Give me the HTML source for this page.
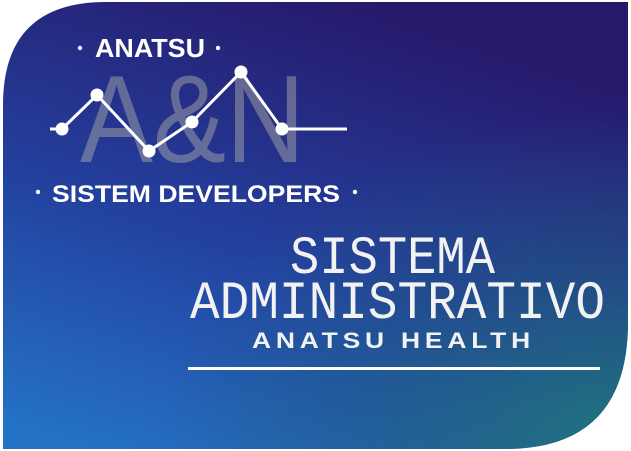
<!DOCTYPE html>
<html><head><meta charset="utf-8"><style>
html,body{margin:0;padding:0;background:#fff;width:631px;height:451px;overflow:hidden}
svg{display:block}
</style></head><body>
<svg width="631" height="451" viewBox="0 0 631 451" xmlns="http://www.w3.org/2000/svg">
<defs>
<linearGradient id="g1" x1="0.15" y1="1" x2="0.6" y2="0" gradientUnits="objectBoundingBox">
<stop offset="0" stop-color="#2472c4"/>
<stop offset="0.45" stop-color="#2342a0"/>
<stop offset="1" stop-color="#27186a"/>
</linearGradient>
<radialGradient id="g2" cx="1" cy="1" r="0.75">
<stop offset="0" stop-color="#1f7a78" stop-opacity="0.95"/>
<stop offset="0.6" stop-color="#21607a" stop-opacity="0.4"/>
<stop offset="1" stop-color="#21607a" stop-opacity="0"/>
</radialGradient>
<clipPath id="c"><path d="M3 449 L3 105 Q3 2 106 2 L628 2 L628 322 Q628 449 505 449 Z"/></clipPath>
</defs>
<g clip-path="url(#c)">
<rect width="631" height="451" fill="url(#g1)"/>
<rect width="631" height="451" fill="url(#g2)"/>
</g>
<g font-family="Liberation Sans, sans-serif" font-weight="bold" fill="#fff">
<circle cx="80" cy="48" r="2.2"/><circle cx="218" cy="48" r="2.2"/>
<text x="95" y="57" font-size="26" textLength="110" lengthAdjust="spacingAndGlyphs">ANATSU</text>
<circle cx="38" cy="192" r="2.2"/><circle cx="355" cy="192" r="2.2"/>
<text x="52" y="202" font-size="24" textLength="288" lengthAdjust="spacingAndGlyphs">SISTEM DEVELOPERS</text>
</g>
<text x="80" y="162" font-family="Liberation Sans, sans-serif" font-size="124" fill="#a6a6a6" fill-opacity="0.5" textLength="225" lengthAdjust="spacingAndGlyphs">A&amp;N</text>
<polyline points="50,129 62,129 97,95 149,151 192,122 241,72 282,129 347,129" fill="none" stroke="#fff" stroke-width="3"/>
<g fill="#fff"><circle cx="62" cy="129" r="6.5"/><circle cx="97" cy="95" r="6.5"/><circle cx="149" cy="151" r="6.5"/><circle cx="192" cy="122" r="6.5"/><circle cx="241" cy="72" r="6.5"/><circle cx="282" cy="129" r="6.5"/></g>
<g font-family="Liberation Mono, monospace" fill="#f2f2f2">
<text x="290" y="273" font-size="54" textLength="205" lengthAdjust="spacingAndGlyphs">SISTEMA</text>
<text x="190" y="318" font-size="54" textLength="415" lengthAdjust="spacingAndGlyphs">ADMINISTRATIVO</text>
</g>
<text x="252" y="348" font-family="Liberation Sans, sans-serif" font-weight="bold" font-size="22" fill="#f2f2f2" textLength="283" lengthAdjust="spacingAndGlyphs" letter-spacing="4">ANATSU HEALTH</text>
<rect x="188" y="367" width="412" height="3" fill="#fff"/>
</svg>
</body></html>
